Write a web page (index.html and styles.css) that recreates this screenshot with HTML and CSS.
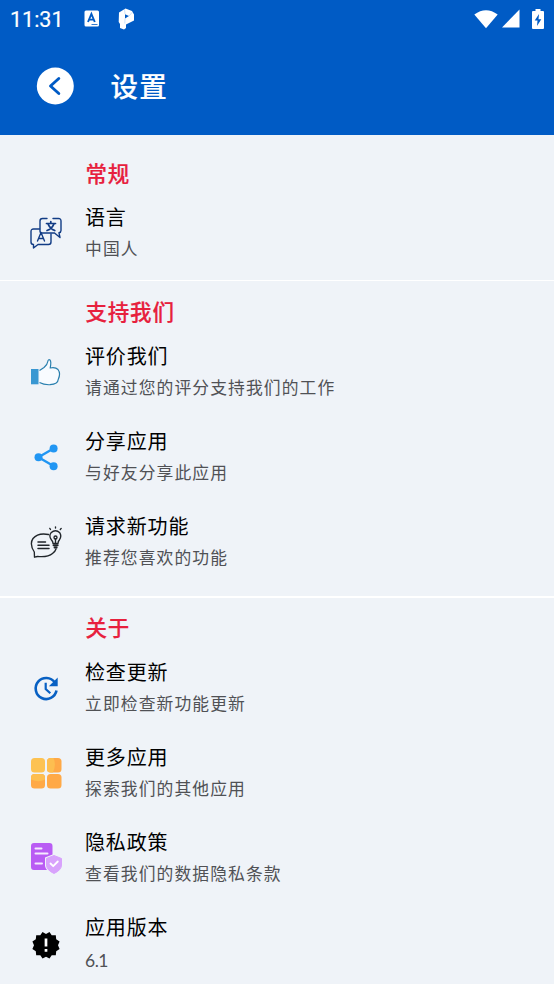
FILE: index.html
```html
<!DOCTYPE html>
<html lang="zh-CN">
<head>
<meta charset="utf-8">
<title>设置</title>
<link rel="stylesheet" href="styles.css">
</head>
<body>
<header class="top">
  <div class="status">
    <span class="time">11:31</span>
    <svg class="s-app" width="16" height="17" viewBox="0 0 16 17"><rect x=".5" y=".5" width="14.5" height="16" rx="1.5" fill="#fff"/><path d="M4 12 7.400 4 10.800 12M5.200 9.600h4.400" fill="none" stroke="#005bc5" stroke-width="1.900"/><path d="M7.500 14.500h6" stroke="#005bc5" stroke-width=".8"/></svg>
    <svg class="s-p" width="17" height="22" viewBox="0 0 17 22"><path d="M1 4.500 7.500.5 14 3l2 3.500v6L8 16.500V20l-2 1.500L2 20V16L.7 14z" fill="#fff"/><path d="M7 6.200 11 8 7 10.500z" fill="#005bc5"/><path d="M6.500 1 7 6M7 10.500l-.2 5M11 8l3.500-4" stroke="#9dc4f0" stroke-width=".5"/></svg>
    <span class="grow"></span>
    <svg width="24" height="20" viewBox="0 0 24 20"><path d="M.3 5.500Q12-3 23.700 5.500L12 19.300z" fill="#fff"/></svg>
    <svg class="s-cell" width="18" height="19" viewBox="0 0 18 19"><path d="M17.500.5V18.500H0z" fill="#fff"/></svg>
    <svg class="s-bat" width="12" height="20" viewBox="0 0 12 20"><path d="M3.500 0h5v2H11q1 0 1 1v16q0 1-1 1H1q-1 0-1-1V3q0-1 1-1h2.500z" fill="#fff"/><path d="M7 5 2.700 11.500H5.500L5 17l4.300-6.800H6.500z" fill="#005bc5"/></svg>
  </div>
  <div class="bar">
    <svg width="38" height="38" viewBox="0 0 38 38"><circle cx="19.300" cy="19" r="18.500" fill="#fff"/><path d="M22.800 11.500 14.500 19l8.300 7.500" fill="none" stroke="#005bc5" stroke-width="2.900" stroke-linecap="round" stroke-linejoin="round"/></svg>
    <h1>设置</h1>
  </div>
</header>
<main>
  <section class="general">
    <h2>常规</h2>
    <div class="row">
      <svg class="icon" viewBox="0 0 32 32"><g fill="none" stroke="#123c85" stroke-width="1.400" stroke-linecap="round" stroke-linejoin="round"><path d="M17 1.500H12.500Q10 1.500 10 4V14Q10 16 12 16H24.500L30 20.500 29 15.800Q31 15.500 31 13.500V4Q31 1.500 28.500 1.500H23"/><path d="M9.500 12H3.500Q1 12 1 14.500V25Q1 27.500 3.500 27.500V31L8 27.500H18.500Q21 27.500 21 25V17"/><path d="M7.500 24 11 15.500 14.500 24M8.800 21.500H13.200"/><path d="M16.500 6.500H25.500M20.800 4.500V6.500M18 6.800Q20 11.500 24.800 13.500M24 6.800Q22 11.500 17 13.500" stroke-width="1.700"/></g></svg>
      <div class="copy"><h3>语言</h3><p>中国人</p></div>
    </div>
  </section>
  <section class="support">
    <h2>支持我们</h2>
    <div class="row">
      <svg class="icon" viewBox="0 0 32 32"><path d="M1 13h7.500v15.300H1z" fill="#3997d2"/><path d="M9.500 14.500 14 11.500Q17.500 8.500 17.800 5.500 18.200 3 20 4 21.500 5.500 20.200 12 25.500 11 28 13.500 31 17.500 28.200 23.500 28 28 20 28.700 14 29 9.500 26.500" fill="#f8fbff" stroke="#297fae" stroke-width="1.200" stroke-linejoin="round"/></svg>
      <div class="copy"><h3>评价我们</h3><p>请通过您的评分支持我们的工作</p></div>
    </div>
    <div class="row">
      <svg class="icon" viewBox="0 0 32 32"><path d="M23.500 7.500 8.500 16.300l15 8.700" fill="none" stroke="#2196f3" stroke-width="2.400"/><g fill="#2196f3"><circle cx="23.600" cy="7.500" r="4"/><circle cx="8.500" cy="16.300" r="4"/><circle cx="23.600" cy="25.200" r="4"/></g></svg>
      <div class="copy"><h3>分享应用</h3><p>与好友分享此应用</p></div>
    </div>
    <div class="row">
      <svg class="icon" viewBox="0 0 32 32"><g fill="none" stroke="#20252a" stroke-width="1.350" stroke-linecap="round" stroke-linejoin="round"><path d="M18.500 8.500Q8 6.500 3 12.500-.8 18 4.300 26L4.500 31.200 7.500 30.500Q18 31.500 22.500 27.500 25.500 25 26 23"/><path d="M8 16h7.500M8 19.200h11M8 22.400h11" stroke-width="1.500"/><path d="M23 17.500Q23 15.500 21.500 14 18.500 10 21 6.800 25.500 2.800 29.800 6.800 32 10.500 29.300 14 28 15.500 28 17.500z"/><path d="M23.500 19.300h4.200M24.500 21.500h2.200" stroke-width="1.900"/><path d="M25.500 17V13"/><circle cx="25.500" cy="11.500" r="1.500"/><path d="M25.500 2V.8M20.500 3.500 19.800 2.400M30.300 3.500 31.200 2.400"/></g></svg>
      <div class="copy"><h3>请求新功能</h3><p>推荐您喜欢的功能</p></div>
    </div>
  </section>
  <section class="about">
    <h2>关于</h2>
    <div class="row">
      <svg class="icon" viewBox="0 0 32 32"><g fill="none" stroke="#0860c3" stroke-width="2.600"><path d="M24.800 10.500A10.500 10.500 0 1 0 26.500 18.500"/><path d="M15.700 10.800V17L20.300 21.300" stroke-width="2.200"/></g><path d="M27.700 5.500v8.800H18.900z" fill="#0860c3"/></svg>
      <div class="copy"><h3>检查更新</h3><p>立即检查新功能更新</p></div>
    </div>
    <div class="row">
      <svg class="icon" viewBox="0 0 32 32"><rect x="1" y="1" width="14" height="14.500" rx="3.500" fill="#fdc252"/><rect x="17" y="1" width="14.500" height="14.500" rx="3.500" fill="#ffa947"/><path d="M20.500 1h3q3 7-.5 14.500h-2.500q-3.500 0-3.500-3.500v-7.500Q17 1 20.500 1z" fill="#fdbe50"/><rect x="1" y="17" width="14" height="14.500" rx="3.500" fill="#ffa947"/><path d="M1 20.500Q1 17 4.500 17h7q3.500 0 3.500 3.500v2Q9 26 1 22.500z" fill="#fdbe50"/><rect x="17" y="17" width="14.500" height="14.500" rx="3.500" fill="#ffa947"/></svg>
      <div class="copy"><h3>更多应用</h3><p>探索我们的其他应用</p></div>
    </div>
    <div class="row">
      <svg class="icon" viewBox="0 0 32 32"><path d="M4 1h15.500q3 0 3 3v8.500L15 15.500v8.500q.5 2.500 2 4H4q-3 0-3-3V4q0-3 3-3z" fill="#b95cf4"/><path d="M5.500 6.500h6M5.500 11.500h12M5.500 21.500h6.500" stroke="#f5eafe" stroke-width="2" stroke-linecap="round"/><path d="M24 13.500l7.500 3v6.500q0 5-7.500 8.500-7.500-3.500-7.500-8.500v-6.500z" fill="#d8a2fc" stroke="#d8a2fc" stroke-linejoin="round"/><path d="M20.500 21.500 23.200 24.200 27.800 19.500" fill="none" stroke="#fff" stroke-width="1.800" stroke-linecap="round" stroke-linejoin="round"/></svg>
      <div class="copy"><h3>隐私政策</h3><p>查看我们的数据隐私条款</p></div>
    </div>
    <div class="row version">
      <svg class="icon" viewBox="0 0 32 32"><path d="M16 5 19.500 3 21.700 6.300 25.800 6.300 26.200 10.300 29.600 12.500 28 16.300 29.600 20 26.200 22.300 25.800 26.300 21.700 26.300 19.500 29.600 16 27.800 12.500 29.600 10.300 26.300 6.200 26.300 5.800 22.300 2.400 20 4 16.300 2.400 12.500 5.800 10.300 6.200 6.300 10.300 6.300 12.500 3z"/><path d="M16 9.500v8M16 20v2.700" stroke="#fff" stroke-width="2.700"/></svg>
      <div class="copy"><h3>应用版本</h3><p>6.1</p></div>
    </div>
  </section>
</main>
</body>
</html>
```
FILE: styles.css
```css
* { box-sizing: border-box; }
body {
  margin: 0;
  height: 984px;
  overflow: hidden;
  background: #eff3f8;
  font-family: "Noto Sans CJK SC", sans-serif;
}
svg { display: block; flex: none; }
h1, h2, h3, p { margin: 0; white-space: nowrap; }
.top { height: 135px; background: #005bc5; color: #fff; }
.status {
  display: flex;
  align-items: center;
  height: 37px;
  padding: 0 10px;
}
.time {
  width: 74px;
  font: 400 21.5px/38px Roboto, sans-serif;
  -webkit-text-stroke: .2px currentColor;
  padding-top: 2px;
}
.s-p { margin-left: 18px; }
.grow { flex: 1; }
.s-cell { margin-left: 4px; }
.s-bat { margin-left: 12px; }
.bar {
  display: flex;
  align-items: center;
  height: 98px;
  padding-left: 36px;
}
.bar h1 {
  margin: -2px 0 0 36.5px;
  font-size: 27.5px;
  font-weight: 500;
  line-height: 40px;
  letter-spacing: 1.2px;
  -webkit-text-stroke: .2px currentColor;
}
section { border-bottom: 2px solid #fff; }
.general { padding: 20px 0 5px; border-bottom-width: 1px; }
.support { padding: 12px 0; }
.about { padding-top: 11px; border: 0; }
h2 {
  padding-left: 85.5px;
  height: 36px;
  font-size: 21.5px;
  font-weight: 500;
  line-height: 35px;
  letter-spacing: .8px;
  color: #e7203d;
  -webkit-text-stroke: .2px currentColor;
}
.general h2 { height: 35px; }
.row { display: flex; align-items: center; height: 85px; padding-left: 30px; }
.icon { width: 32px; height: 32px; margin-right: 25px; }
.copy { margin-left: -2px; }
h3 {
  margin-top: -1px;
  font-size: 20px;
  font-weight: 400;
  line-height: 31px;
  letter-spacing: .85px;
  color: #000;
}
p {
  margin-top: 1px;
  font-size: 16.8px;
  line-height: 30px;
  letter-spacing: 1.1px;
  color: #505155;
}
.version .icon { margin-top: 4px; }
.version p { font-family: Lato, sans-serif; font-size: 17.5px; padding-top: 3px; margin-bottom: -3px; letter-spacing: -.5px; }
```
